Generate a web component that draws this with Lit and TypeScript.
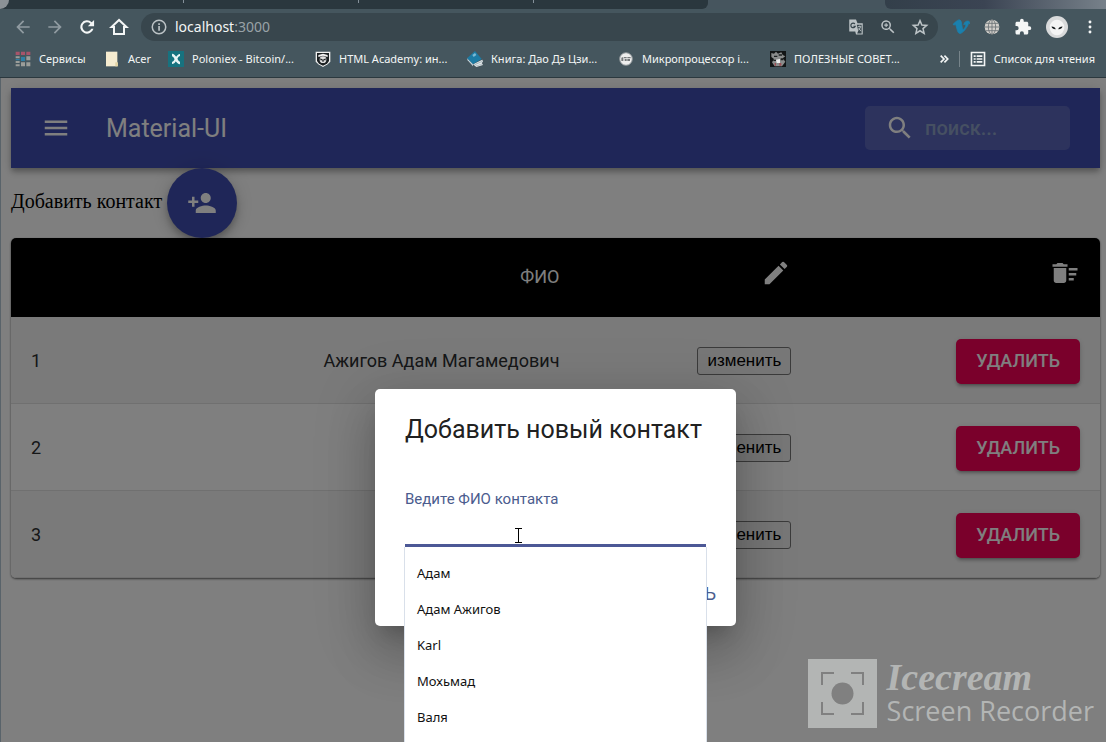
import { LitElement, html, svg, css } from "lit";
import { customElement, property, state } from "lit/decorators.js";

const icons: Record<string, unknown> = {
  menu: svg`<path d="M3 18h18v-2H3v2zm0-5h18v-2H3v2zm0-7v2h18V6H3z"/>`,
  search: svg`<path d="M15.5 14h-.79l-.28-.27C15.41 12.59 16 11.11 16 9.5 16 5.91 13.09 3 9.5 3S3 5.91 3 9.5 5.91 16 9.5 16c1.61 0 3.09-.59 4.23-1.57l.27.28v.79l5 4.99L20.49 19l-4.99-5zm-6 0C7.01 14 5 11.99 5 9.5S7.01 5 9.5 5 14 7.01 14 9.5 11.99 14 9.5 14z"/>`,
  personAdd: svg`<path d="M15 12c2.21 0 4-1.79 4-4s-1.79-4-4-4-4 1.79-4 4 1.79 4 4 4zm-9-2V7H4v3H1v2h3v3h2v-3h3v-2H6zm9 4c-2.67 0-8 1.34-8 4v2h16v-2c0-2.66-5.33-4-8-4z"/>`,
  edit: svg`<path d="M3 17.25V21h3.75L17.81 9.94l-3.75-3.75L3 17.25zM20.71 7.04c.39-.39.39-1.02 0-1.41l-2.34-2.34a.9959.9959 0 00-1.41 0l-1.83 1.83 3.75 3.75 1.83-1.83z"/>`,
  sweep: svg`<path d="M15 16h4v2h-4zm0-8h7v2h-7zm0 4h6v2h-6zM3 18c0 1.1.9 2 2 2h6c1.1 0 2-.9 2-2V8H3v10zM14 5h-3l-1-1H6L5 5H2v2h12z"/>`,
  back: svg`<path d="M20 11H7.83l5.59-5.59L12 4l-8 8 8 8 1.41-1.41L7.83 13H20v-2z"/>`,
  forward: svg`<path d="M12 4l-1.41 1.41L16.17 11H4v2h12.17l-5.58 5.59L12 20l8-8z"/>`,
  reload: svg`<path d="M17.65 6.35A8 8 0 1 0 19.73 14h-2.6A5.5 5.5 0 1 1 16 8.1L13 11h7.5V3.5z"/>`,
  home: svg`<path fill="none" stroke="currentColor" stroke-width="2.4" d="M12 3.5L3 12h3v8.500h12V12h3z"/>`,
  info: svg`<circle cx="12" cy="12" r="9" fill="none" stroke="currentColor" stroke-width="2"/><path d="M11 10.5h2.2V17H11zM11 7h2.2v2.2H11z"/>`,
  translate: svg`<path d="M3 2h9l2 5h7v15h-9l-1-4H3z"/><path d="M13 9h6.5v11.5H13.5L15 17z" fill="#38464d"/><path d="M14.5 11.5h4.500M17 10v1.500M18 12c-.5 2-2 3.500-3 4.500M15.500 13.500l3 4" fill="none" stroke="currentColor" stroke-width="1.200"/><path d="M10.500 8a3 3 0 1 0 .5 3H8.500" fill="none" stroke="#38464d" stroke-width="1.600"/>`,
  zoomIn: svg`<path d="M15.500 14h-.79l-.28-.27A6.500 6.500 0 1 0 13.730 14.430l.27.28v.79l5 4.990L20.490 19zm-6 0a4.500 4.500 0 1 1 0-9 4.500 4.500 0 0 1 0 9zM10.300 7H8.700v1.700H7v1.600h1.700V12h1.600v-1.700H12V8.700h-1.700z"/>`,
  star: svg`<path fill="none" stroke="currentColor" stroke-width="2" d="M12 3.500l2.500 5.900 6.400.5-4.900 4.200 1.500 6.300L12 17l-5.500 3.400L8 14.100 3.100 9.900l6.400-.5z"/>`,
  vimeo: svg`<path fill="#1a80ae" stroke="#1a80ae" stroke-width="1" d="M22 6.800c-.1 2-1.500 4.700-4.200 8.200-2.800 3.600-5.200 5.600-7.300 5.600-1.300 0-2.400-1.200-3.200-3.500L5.700 11.200C5.200 9.300 4.700 8.700 4.100 8.700c-.2 0-.8.300-1.600.9L1.500 8.200 5.300 4.800C7 3.300 8.100 2.600 9 2.500c2-.2 3.200 1.200 3.700 4.100.5 3.200.8 5.100 1 5.900.4 1.800.9 2.700 1.400 2.700s1-.7 1.900-2c.8-1.300 1.300-2.300 1.300-3 .1-1.100-.3-1.700-1.300-1.700-.5 0-.9.1-1.400.3 1-3.200 2.800-4.800 5.500-4.700 2 .1 2.900 1.300 2.800 3.700z"/>`,
  globe: svg`<circle cx="12" cy="12" r="11" fill="#d2cfca"/><g fill="none" stroke="#6c7376" stroke-width="1.300"><path d="M12 1v22M1 12h22M3 6.500h18M3 17.500h18"/><ellipse cx="12" cy="12" rx="5.500" ry="11"/></g>`,
  puzzle: svg`<path d="M20.500 11H19V7c0-1.100-.9-2-2-2h-4V3.500a2.500 2.500 0 0 0-5 0V5H4c-1.100 0-2 .9-2 2v3.800h1.500a2.700 2.700 0 0 1 0 5.400H2V20c0 1.100.9 2 2 2h3.800v-1.500a2.700 2.700 0 0 1 5.400 0V22H17c1.100 0 2-.9 2-2v-4h1.500a2.500 2.500 0 0 0 0-5z"/>`,
  alien: svg`<circle cx="12" cy="12" r="12" fill="#d9dadb"/><ellipse cx="12" cy="12.500" rx="8" ry="8.500" fill="#f4f4f4"/><path fill="#15191b" d="M6 11.500c2.200-.1 4.200 1 4.600 2.900C8.400 14.600 6.500 13.600 6 11.500zM18 11.500c-2.200-.1-4.200 1-4.600 2.900 2.200.2 4.100-.8 4.600-2.900z"/>`,
  dots: svg`<circle cx="12" cy="4.500" r="2.200"/><circle cx="12" cy="12" r="2.200"/><circle cx="12" cy="19.500" r="2.200"/>`,
  list: svg`<path fill="none" stroke="currentColor" stroke-width="2.400" d="M2.200 2.200h19.600v19.600H2.200z"/><path d="M5.500 6.500h3v2.400h-3zm4.500 0h8.500v2.400H10zm-4.500 4.300h3v2.400h-3zm4.500 0h8.500v2.400H10zm-4.500 4.300h3v2.400h-3zm4.500 0h8.500v2.400H10z"/>`,
  more: svg`<path fill="none" stroke="currentColor" stroke-width="4" d="M4 4l8 8-8 8M13 4l8 8-8 8"/>`,
  apps: svg`<path fill="#a8546a" d="M1 1h6v5H1zM9 1h6v5H9zM17 1h6v5h-6z"/><path fill="#9b9d99" d="M1 8h6v3H1zM17 8h6v6h-6zM1 15h6v3H1zM9 17h6v6H9zM17 17h6v6h-6zM1 20h6v3H1z"/><path fill="#2f7fa5" d="M9 9h6v6H9zM1 12h6v2H1z"/>`,
  folder: svg`<path fill="#f6ecd0" d="M3 1h17v22H3z"/><path fill="#e2d3a4" d="M17 17h4v6h-4z"/>`,
  poloniex: svg`<path fill="#17727f" d="M0 0h24v24H0z"/><path fill="none" stroke="#e9f4f5" stroke-width="4" d="M6 6c6 0 6 12 12 12"/><path fill="none" stroke="#e9f4f5" stroke-width="3" d="M18 6c-6 0-6 12-12 12"/>`,
  shield: svg`<path fill="#f1f1f1" d="M1 1h22v15l-4 4-7 4-7-4-4-4z"/><path fill="#1c2123" d="M3 3h18v12l-3 4-6 3-6-3-3-4z"/><path fill="#f1f1f1" d="M5 6l7-2 7 2v3l-7-2-7 2z"/><circle cx="12" cy="13" r="5" fill="#e1e1e1"/><path fill="#1c2123" d="M8 11l4 2 4-2v3h-3v2h-2v-2H8z"/>`,
  book: svg`<path fill="#e1e6e8" d="M9 20l14-7 1 3-2 2 2 3-10 3z"/><path fill="#9fb0b8" d="M11 20l12-5v1l-11 5zM13 22l10-3v1l-9 3z"/><path fill="#1d7ba4" d="M12 0l10 12-13 8L0 11z"/><path fill="#7bb9d3" d="M8 6l4-3 2 3-4 3z"/><path fill="#c9d6dc" d="M0 11l9 9v3L1 14z"/>`,
  chip: svg`<circle cx="12" cy="12" r="9.500" fill="#eee" stroke="#8b9296" stroke-width="1.500"/><path fill="#75797b" d="M5 10l3-1v6H5zM9 9h4v2H9zM10 12h3v3h-3zM14 9h5v2h-5zM14 12h4v3h-4z"/>`,
  tips: svg`<path fill="#121516" d="M0 0h24v24H0z"/><path fill="#8a8c8c" d="M2 3l4 1 3-3 3 3 5-2 2 4 4 2-4 3 4 5-5 7H7L3 17l3-5-4-3z"/><path fill="#1c2021" d="M6 7h5v2H6zM13 5h5v2h-5zM5 13h4v2H5zM16 11h4v3h-4z"/><path fill="#9c4e55" d="M7 18h2v4H7zM14 18h3v4h-3z"/><path fill="#eee" d="M9 13l6-1v6h-5z"/>`,
};

const icon = (name: string, cls: string) =>
  html`<svg class=${cls} viewBox="0 0 24 24" aria-hidden="true">${icons[name]}</svg>`;

@customElement("browser-bar")
export class BrowserBar extends LitElement {
  @state() private bookmarks = [
    ["apps", "Сервисы"],
    ["folder", "Acer"],
    ["poloniex", "Poloniex - Bitcoin/..."],
    ["shield", "HTML Academy: ин..."],
    ["book", "Книга: Дао Дэ Цзи..."],
    ["chip", "Микропроцессор i..."],
    ["tips", "ПОЛЕЗНЫЕ СОВЕТ..."],
  ];

  static styles = css`
    :host { display: block; background: #45565e; color: #f4f6f6; border-bottom: 1px solid #2b383e; font-family: "Noto Sans", sans-serif; }
    svg { display: block; flex: none; fill: currentColor; }
    .tabs { height: 9px; display: flex; justify-content: space-between; background: #46555e; overflow: hidden; }
    .open { width: 64%; display: flex; background: #2a373e; border-bottom-right-radius: 6px; }
    .stub { width: 9px; background: #8b9196; border-bottom-right-radius: 9px; }
    .tab { flex: 1; height: 3px; border-right: 1px solid #85909a; }
    .tab:last-child { border: 0; }
    .rest { width: 20%; border-bottom-left-radius: 6px; background: linear-gradient(90deg, #333f4a, #3b4453 45%, #77818a); }
    .nav { display: flex; align-items: center; height: 36px; padding: 0 8px 0 13px; }
    .tools { display: flex; gap: 12px; }
    button { border: 0; padding: 0; background: none; color: inherit; font: inherit; }
    .dim { color: #909ba1; }
    .i20 { width: 20px; height: 20px; }
    .i18 { width: 18px; height: 18px; }
    .i16 { width: 16px; height: 16px; }
    .i10 { width: 10px; height: 10px; }
    .i22 { width: 22px; height: 22px; }
    .address { flex: 1; display: flex; align-items: center; gap: 7px; height: 28px; margin: 0 14px 0 12px; padding: 0 9px; border-radius: 14px; background: #38464d; color: #bcc3c6; }
    .url { flex: 1; font-size: 14px; line-height: 20px; color: #98a2a7; }
    .host { color: #f3f5f5; }
    .actions { display: flex; gap: 14px; }
    .extensions { display: flex; align-items: center; gap: 14px; }
    .marks { display: flex; align-items: center; height: 32px; padding: 0 11px 5px 15px; box-sizing: border-box; font-size: 11px; line-height: 16px; white-space: nowrap; }
    .list { flex: 1; display: grid; grid-template-columns: 89px 64px 147px 152px 151px 152px 1fr; }
    a { display: flex; gap: 8px; align-items: center; color: inherit; text-decoration: none; }
    .more { margin-right: 10px; }
    .reading { display: flex; align-items: center; gap: 8px; height: 16px; padding-left: 10px; border-left: 1px solid #77848a; }
  `;

  render() {
    return html`
      <div class="tabs">
        <div class="open"><div class="stub"></div><div class="tab"></div><div class="tab"></div><div class="tab"></div><div class="tab"></div></div>
        <div class="rest"></div>
      </div>
      <div class="nav">
        <div class="tools">
          <button class="dim" aria-label="Назад">${icon("back", "i20")}</button>
          <button class="dim" aria-label="Вперёд">${icon("forward", "i20")}</button>
          <button aria-label="Обновить">${icon("reload", "i20")}</button>
          <button aria-label="Домой">${icon("home", "i20")}</button>
        </div>
        <div class="address">
          ${icon("info", "i18")}
          <span class="url"><span class="host">localhost</span>:3000</span>
          <div class="actions">${icon("translate", "i18")}${icon("zoomIn", "i18")}${icon("star", "i18")}</div>
        </div>
        <div class="extensions">
          ${icon("vimeo", "i18")}${icon("globe", "i16")}${icon("puzzle", "i18")}${icon("alien", "i22")}
          <button aria-label="Меню">${icon("dots", "i16")}</button>
        </div>
      </div>
      <div class="marks">
        <div class="list">
          ${this.bookmarks.map(([name, label]) => html`<a href="#">${icon(name, "i16")}<span>${label}</span></a>`)}
        </div>
        <button class="more" aria-label="Другие закладки">${icon("more", "i10")}</button>
        <button class="reading">${icon("list", "i16")}<span>Список для чтения</span></button>
      </div>
    `;
  }
}

@customElement("contact-table")
export class ContactTable extends LitElement {
  @property({ attribute: false }) rows: { id: number; name: string }[] = [];

  static styles = css`
    :host { display: block; border-radius: 5px; overflow: hidden; background: #fff; box-shadow: 0 1px 2px rgba(0, 0, 0, 0.5), 0 1px 3px rgba(0, 0, 0, 0.15); }
    table { width: 100%; table-layout: fixed; border-collapse: collapse; font: 400 18px/26px Roboto, sans-serif; color: #2c2e30; }
    .c1 { width: 15.2%; }
    .c2 { width: 37%; }
    .c3 { width: 21.3%; }
    .c4 { width: 26.5%; }
    th { padding: 20px; background: #000; color: #fff; font-weight: 400; text-align: right; border-bottom: 1px solid #000; }
    .glyph { display: block; width: 30px; height: 30px; margin: 0 0 8px auto; fill: currentColor; }
    td { height: 87px; box-sizing: border-box; padding: 2px 20px 0; text-align: right; border-bottom: 1px solid #e0e0e0; }
    td:first-child { text-align: left; }
    tbody tr:nth-child(odd) { background: #f5f5f5; }
    .edit { height: 28px; padding: 0 9px; border: 1px solid #767676; border-radius: 3px; background: #efefef; color: #000; font: 17px/20px "Liberation Sans", sans-serif; }
    .remove { display: block; height: 45px; margin-left: auto; padding: 0 20px; border: 0; border-radius: 5px; background: #f50057; color: #fff; font: 500 18px/30px Roboto, sans-serif; text-transform: uppercase; box-shadow: 0 4px 2px -3px rgba(0, 0, 0, 0.2), 0 3px 3px rgba(0, 0, 0, 0.14), 0 1px 6px rgba(0, 0, 0, 0.12); }
  `;

  render() {
    return html`
      <table>
        <colgroup><col class="c1" /><col class="c2" /><col class="c3" /><col class="c4" /></colgroup>
        <thead>
          <tr><th></th><th>ФИО</th><th>${icon("edit", "glyph")}</th><th>${icon("sweep", "glyph")}</th></tr>
        </thead>
        <tbody>
          ${this.rows.map((row) => html`
            <tr>
              <td>${row.id}</td>
              <td>${row.name}</td>
              <td><button class="edit">изменить</button></td>
              <td><button class="remove">удалить</button></td>
            </tr>`)}
        </tbody>
      </table>
    `;
  }
}

@customElement("contact-dialog")
export class ContactDialog extends LitElement {
  @property({ attribute: false }) suggestions: string[] = [];

  static styles = css`
    :host { display: block; box-sizing: border-box; min-width: 361px; padding: 21px 0 10px; border-radius: 5px; background: #fff; font-family: Roboto, sans-serif; color: #212121; box-shadow: 0 14px 19px -9px rgba(0, 0, 0, 0.2), 0 30px 48px 4px rgba(0, 0, 0, 0.14), 0 11px 58px 10px rgba(0, 0, 0, 0.12); }
    h2 { margin: 0; padding: 0 30px; font-size: 25px; line-height: 40px; font-weight: 400; white-space: nowrap; }
    .field { position: relative; margin: 39px 30px 24px; }
    label { display: block; font-size: 15px; line-height: 20px; color: #4b5c8e; }
    input { display: block; box-sizing: border-box; width: 100%; height: 38px; padding: 4px 0; border: 0; border-bottom: 3px solid #4c5896; outline: 0; background: none; font: 20px/24px Roboto, sans-serif; }
    ul { position: absolute; top: 100%; left: 0; right: 0; margin: 0; padding: 8px 0; list-style: none; background: #fff; box-shadow: 0 0 0 1px #d9e0ea; clip-path: inset(0 -1px -1px -1px); font: 13px/36px "Noto Sans", sans-serif; color: #111; }
    li { padding: 0 12px; }
    .actions { display: flex; justify-content: flex-end; padding: 0 10px; }
    button { height: 45px; padding: 0 10px; border: 0; background: none; color: #4b5c8e; font: 400 18px/30px Roboto, sans-serif; text-transform: uppercase; }
    .caret { position: absolute; left: 109px; top: 38px; width: 9px; height: 17px; }
  `;

  render() {
    return html`
      <h2 id="title">Добавить новый контакт</h2>
      <div class="field">
        <label for="name">Ведите ФИО контакта</label>
        <input id="name" type="text" autocomplete="off" />
        <ul role="listbox">${this.suggestions.map((s) => html`<li role="option">${s}</li>`)}</ul>
        <svg class="caret" viewBox="0 0 9 17" aria-hidden="true"><path d="M1 1.500h7M4.500 1v14M1 15.500h7" fill="none" stroke="#000"/></svg>
      </div>
      <div class="actions"><button>Добавить</button></div>
    `;
  }
}

@customElement("app-root")
export class AppRoot extends LitElement {
  @state() private rows = [
    { id: 1, name: "Ажигов Адам Магамедович" },
    { id: 2, name: "" },
    { id: 3, name: "" },
  ];
  @state() private suggestions = ["Адам", "Адам Ажигов", "Karl", "Мохьмад", "Валя"];

  static styles = css`
    :host { display: flex; flex-direction: column; height: 100vh; overflow: hidden; background: #fff; }
    .page { position: relative; flex: 1; min-height: 0; box-sizing: border-box; padding: 10px 6px 0 11px; }
    .appbar { display: flex; align-items: center; height: 80px; padding: 0 30px; background: #3f4db0; color: #fff; box-shadow: 0 3px 5px -1px rgba(0, 0, 0, 0.2), 0 5px 6px rgba(0, 0, 0, 0.14), 0 1px 12px rgba(0, 0, 0, 0.12); }
    .glyph { display: block; flex: none; width: 30px; height: 30px; fill: currentColor; }
    .menu { padding: 0; border: 0; background: none; color: inherit; }
    h1 { flex: 1; margin: 0 0 0 35px; padding-top: 2px; font: 400 25px/40px Roboto, sans-serif; }
    .search { display: flex; align-items: center; gap: 10px; box-sizing: border-box; width: 205px; height: 44px; padding: 0 20px; border-radius: 5px; background: rgba(255, 255, 255, 0.14); }
    .search input { flex: 1; min-width: 0; padding: 0; border: 0; outline: 0; background: none; font: 500 20px/24px Roboto, sans-serif; color: #fff; }
    .search input::placeholder { color: #8ca0c4; opacity: 1; }
    .add { display: flex; align-items: center; gap: 5px; height: 70px; font: 20px/24px "Liberation Serif", serif; color: #000; }
    .add span { padding-bottom: 4px; }
    .fab { display: grid; place-items: center; width: 70px; height: 70px; padding: 0; border: 0; border-radius: 50%; background: #3f4db0; color: #fff; box-shadow: 0 4px 6px -1px rgba(0, 0, 0, 0.2), 0 7px 12px rgba(0, 0, 0, 0.14), 0 1px 22px rgba(0, 0, 0, 0.12); }
    .backdrop { position: absolute; inset: 0; display: flex; justify-content: center; align-items: flex-start; padding: 311px 0 0 4px; background: rgba(0, 0, 0, 0.5); border-left: 1px solid #59636a; box-sizing: border-box; overflow: hidden; }
    .watermark { position: absolute; right: 12px; bottom: 14px; display: flex; align-items: center; gap: 10px; color: #b3b5b4; }
    .logo { display: block; width: 69px; height: 69px; }
    .brand { display: flex; flex-direction: column; }
    .script { font: italic 700 38px/34px "Liberation Serif", cursive; }
    .product { font: 400 27px/34px "Open Sans", sans-serif; }
  `;

  render() {
    return html`
      <browser-bar></browser-bar>
      <main class="page">
        <header class="appbar">
          <button class="menu" aria-label="Меню">${icon("menu", "glyph")}</button>
          <h1>Material-UI</h1>
          <label class="search">${icon("search", "glyph")}<input type="text" placeholder="поиск..." /></label>
        </header>
        <div class="add">
          <span>Добавить контакт</span>
          <button class="fab" aria-label="Добавить контакт">${icon("personAdd", "glyph")}</button>
        </div>
        <contact-table .rows=${this.rows}></contact-table>
        <div class="backdrop">
          <contact-dialog role="dialog" .suggestions=${this.suggestions}></contact-dialog>
        </div>
        <div class="watermark">
          <svg class="logo" viewBox="0 0 69 69" aria-hidden="true">
            <path d="M0 0h69v69H0z" fill="#b3b5b4"/>
            <circle cx="34.500" cy="34.500" r="11" fill="#808080"/>
            <path d="M14 26V14h12M43 14h12v12M55 43v12H43M26 55H14V43" fill="none" stroke="#808080" stroke-width="2"/>
          </svg>
          <div class="brand"><span class="script">Icecream</span><span class="product">Screen Recorder</span></div>
        </div>
      </main>
    `;
  }
}
